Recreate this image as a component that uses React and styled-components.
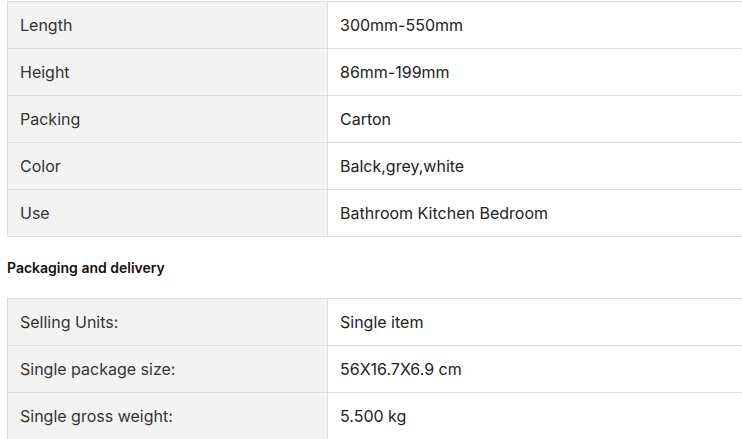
import React from "react";
import styled, { createGlobalStyle } from "styled-components";

const Global = createGlobalStyle`
  html, body { margin: 0; padding: 0; background: #fff; overflow: hidden; }
  body { font-family: Inter, "Noto Sans", Arial, sans-serif; }
`;

const Page = styled.div`
  padding: 1px 0 0 7px;
  width: 735px;
  overflow: hidden;
`;

const Table = styled.table`
  border-collapse: collapse;
  width: 736px;
  table-layout: fixed;
  font-size: 16px;
`;

const Row = styled.tr`
  height: 47px;
`;

const Label = styled.td`
  width: 295px;
  padding: 0 12px;
  background: #f3f3f3;
  color: #333;
  border: 1px solid #dddddd;
  vertical-align: middle;
`;

const Value = styled.td`
  padding: 0 12px;
  background: #fff;
  color: #222;
  border: 1px solid #dddddd;
  vertical-align: middle;
`;

const Heading = styled.div`
  font-size: 14px;
  font-weight: 600;
  color: #111;
  height: 61px;
  display: flex;
  align-items: center;
  line-height: 1;
`;

const specs = [
  ["Length", "300mm-550mm"],
  ["Height", "86mm-199mm"],
  ["Packing", "Carton"],
  ["Color", "Balck,grey,white"],
  ["Use", "Bathroom Kitchen Bedroom"],
];

const packaging = [
  ["Selling Units:", "Single item"],
  ["Single package size:", "56X16.7X6.9 cm"],
  ["Single gross weight:", "5.500 kg"],
];

function SpecTable({ rows }) {
  return (
    <Table>
      <tbody>
        {rows.map(([k, v]) => (
          <Row key={k}>
            <Label>{k}</Label>
            <Value>{v}</Value>
          </Row>
        ))}
      </tbody>
    </Table>
  );
}

export default function App() {
  return (
    <Page>
      <Global />
      <SpecTable rows={specs} />
      <Heading>Packaging and delivery</Heading>
      <SpecTable rows={packaging} />
    </Page>
  );
}
